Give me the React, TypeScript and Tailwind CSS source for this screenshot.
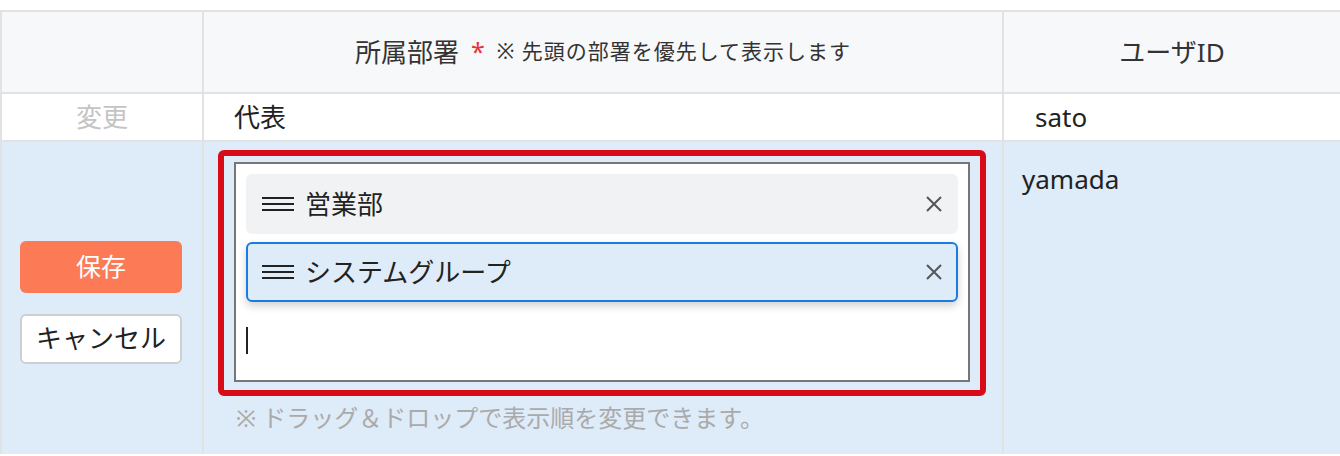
const font = { fontFamily: '"Noto Sans", "Noto Sans CJK JP", sans-serif' };

function Grip() {
  return (
    <svg width="32" height="14" viewBox="0 0 32 14" className="shrink-0">
      <rect x="0" y="0" width="32" height="2" fill="#222" />
      <rect x="0" y="6" width="32" height="2" fill="#222" />
      <rect x="0" y="12" width="32" height="2" fill="#222" />
    </svg>
  );
}

function Close() {
  return (
    <svg width="16" height="16" viewBox="0 0 16 16" className="shrink-0">
      <path d="M1 1 L15 15 M15 1 L1 15" stroke="#555" strokeWidth="2" fill="none" />
    </svg>
  );
}

function Chip({ label, active }: { label: string; active?: boolean }) {
  return (
    <div
      className={
        active
          ? "flex h-[60px] items-center rounded-md border-2 border-[#1a7be0] bg-[#deebf8] pl-[14px] pr-[14px] shadow-[0_4px_8px_rgba(0,0,0,0.18)]"
          : "flex h-[60px] items-center rounded-md border-2 border-transparent bg-[#f1f2f4] pl-[14px] pr-[14px]"
      }
    >
      <Grip />
      <span className="ml-[11px] flex-1 text-[26px] leading-none text-[#222]">{label}</span>
      <Close />
    </div>
  );
}

export default function App() {
  return (
    <div className="w-[1340px] overflow-hidden bg-white pt-[10px] text-[#333]" style={font}>
      <div className="border-l-2 border-t-2 border-[#e1e2e4]">
        {/* header */}
        <div className="flex h-[82px] border-b-2 border-[#e1e2e4] bg-[#f7f8fa]">
          <div className="w-[202px] shrink-0 border-r-2 border-[#e1e2e4]" />
          <div className="flex w-[800px] shrink-0 items-center justify-center border-r-2 border-[#e1e2e4]">
            <span className="text-[26px]">所属部署</span>
            <span className="ml-[12px] text-[25px] text-[#e8333a]">*</span>
            <span className="ml-[12px] text-[21px] tracking-[1px]">※ 先頭の部署を優先して表示します</span>
          </div>
          <div className="flex flex-1 items-center justify-center text-[26px]">ユーザID</div>
        </div>

        {/* read-only row */}
        <div className="flex h-[48px] border-b-2 border-[#e1e2e4] bg-white">
          <div className="flex w-[202px] shrink-0 items-center justify-center border-r-2 border-[#e1e2e4] text-[26px] text-[#c4c4c4]">
            変更
          </div>
          <div className="flex w-[800px] shrink-0 items-center border-r-2 border-[#e1e2e4] pl-[30px] text-[26px] text-[#222]">
            代表
          </div>
          <div className="flex flex-1 items-center pl-[31px] text-[26px] text-[#222]">sato</div>
        </div>

        {/* editing row */}
        <div className="flex bg-[#deebf8]">
          <div className="flex w-[202px] shrink-0 flex-col items-center justify-center gap-[21px] border-r-2 border-[#e1e2e4] pr-[2px] pt-[8px]">
            <button className="h-[52px] w-[162px] rounded-md bg-[#fd7a57] text-[25px] text-white">保存</button>
            <button className="h-[50px] w-[162px] rounded-md border-2 border-[#cfcfcf] bg-white text-[26px] text-[#222]">
              キャンセル
            </button>
          </div>
          <div className="w-[800px] shrink-0 border-r-2 border-[#e1e2e4] pb-[18px] pl-[14px] pr-[16px] pt-[8px]">
            <div className="rounded-md border-[6px] border-[#d70c18] px-[10px] pb-[8px] pt-[6px]">
              <div className="flex flex-col gap-[8px] border-2 border-[#767676] bg-white p-[10px]">
                <Chip label="営業部" />
                <Chip label="システムグループ" active />
                <div className="flex h-[60px] items-center">
                  <div className="h-[27px] w-[2px] bg-[#222]" />
                </div>
              </div>
            </div>
            <p className="mt-[4px] pl-[18px] text-[24px] leading-[36px] text-[#aaa]">
              ※ ドラッグ＆ドロップで表示順を変更できます。
            </p>
          </div>
          <div className="flex-1 pl-[18px] pt-[18px] text-[26px] text-[#222]">yamada</div>
        </div>
      </div>
    </div>
  );
}
